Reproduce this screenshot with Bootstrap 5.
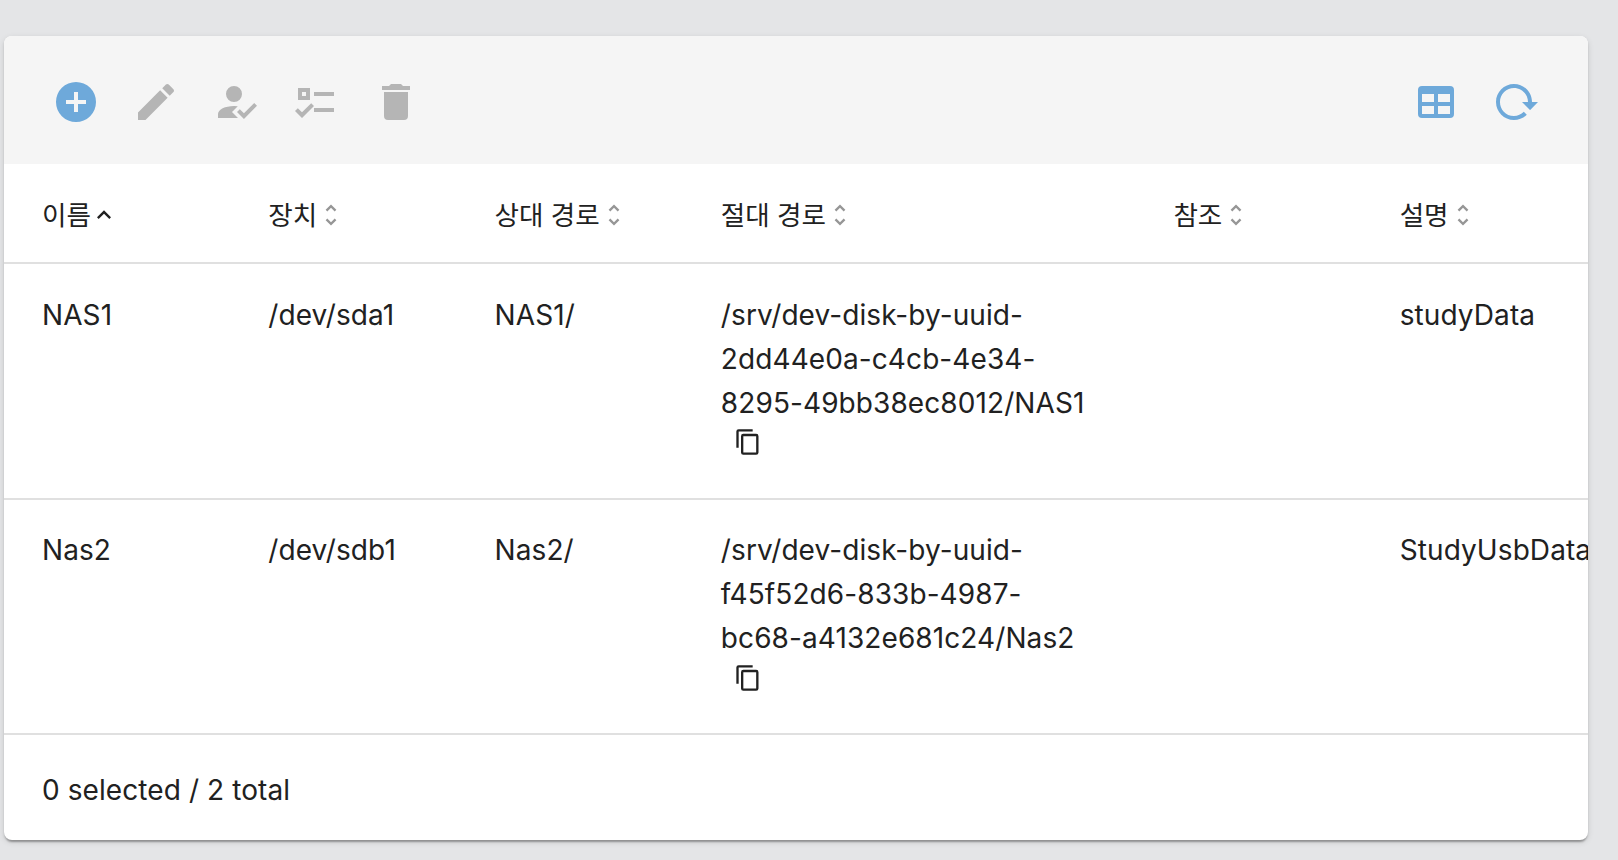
<!DOCTYPE html>
<html lang="ko">
<head>
<meta charset="utf-8">
<meta name="viewport" content="width=device-width, initial-scale=1">
<title>공유 폴더</title>
<link href="https://cdn.jsdelivr.net/npm/bootstrap@5.3.0/dist/css/bootstrap.min.css" rel="stylesheet">
<style>
  body { background: #e4e5e7; color: #212121; font-family: Inter, "Noto Sans CJK KR", sans-serif; font-size: 28px; line-height: 44px; letter-spacing: .09px; height: 860px; overflow: hidden; padding: 36px 30px 20px 4px; }
  .panel { height: 804px; border: 0; border-radius: 8px; background: #fff; color: inherit;
    box-shadow: 0 4px 2px -2px rgba(0,0,0,.2), 0 2px 2px rgba(0,0,0,.14), 0 2px 6px rgba(0,0,0,.12); }
  .toolbar { height: 128px; background: #f5f5f5; border-radius: 8px 8px 0 0; padding: 4px 48px 0; gap: 32px; color: #b5b5b5; }
  .toolbar .btn { padding: 0; border: 0; width: 48px; height: 48px; color: inherit; display: flex; }
  .toolbar .btn.active-tool { color: #6ea9da; }
  svg { fill: currentColor; display: block; flex: none; }
  .sheet { table-layout: fixed; border-collapse: separate; border-spacing: 0; margin: 0; color: inherit; --bs-table-color: #212121; --bs-table-bg: transparent; }
  .sheet > :not(caption) > * > * { padding: 0 0 0 38px; border-bottom: 2px solid #e0e0e0; vertical-align: top; white-space: nowrap; }
  .sheet thead th { height: 100px; font-weight: 400; padding-top: 28px; }
  .sheet tbody td { height: 235.5px; padding-top: 28.5px; }
  .head-label { font-size: 26.6px; letter-spacing: -.05px; height: 44px; }
  .head-label span { padding-top: 1px; }
  .head-label svg { margin-top: 2px; }
  .head-label .sorted { margin-left: -.5px; }
  .copy { padding: 0; border: 0; margin: 3.5px 0 0 13px; color: inherit; display: block; }
  .foot { padding: 33px 38px 0; }
</style>
</head>
<body>
<div class="card panel overflow-visible">
  <div class="toolbar d-flex align-items-center">
    <button class="btn active-tool" aria-label="Create"><svg width="48" height="48" viewBox="0 0 24 24"><path d="M17,13H13V17H11V13H7V11H11V7H13V11H17M12,2A10,10 0 0,0 2,12A10,10 0 0,0 12,22A10,10 0 0,0 22,12A10,10 0 0,0 12,2Z"/></svg></button>
    <button class="btn" aria-label="Edit"><svg width="48" height="48" viewBox="0 0 24 24"><path d="M20.71,7.04C21.1,6.65 21.1,6 20.71,5.63L18.37,3.29C18,2.9 17.35,2.9 16.96,3.29L15.12,5.12L18.87,8.87M3,17.25V21H6.75L17.81,9.93L14.06,6.18L3,17.25Z"/></svg></button>
    <button class="btn" aria-label="Permissions"><svg width="48" height="48" viewBox="0 0 24 24"><path d="M21.1,12.5L22.5,13.91L15.97,20.5L12.5,17L13.9,15.59L15.97,17.67L21.1,12.5M10,17L13,20H3V18C3,15.79 6.58,14 11,14L12.89,14.11L10,17M11,4A4,4 0 0,1 15,8A4,4 0 0,1 11,12A4,4 0 0,1 7,8A4,4 0 0,1 11,4Z"/></svg></button>
    <button class="btn" aria-label="Access control list"><svg width="48" height="48" viewBox="0 0 24 24"><path d="M3,5H9V11H3V5M5,7V9H7V7H5M11,7H21V9H11V7M11,15H21V17H11V15M5,20L1.5,16.5L2.91,15.09L5,17.17L9.59,12.59L11,14L5,20Z"/></svg></button>
    <button class="btn" aria-label="Delete"><svg width="48" height="48" viewBox="0 0 24 24"><path d="M19,4H15.5L14.5,3H9.5L8.5,4H5V6H19M6,19A2,2 0 0,0 8,21H16A2,2 0 0,0 18,19V7H6V19Z"/></svg></button>
    <button class="btn active-tool ms-auto" aria-label="Columns"><svg width="48" height="48" viewBox="0 0 24 24"><path d="M5,4H19A2,2 0 0,1 21,6V18A2,2 0 0,1 19,20H5A2,2 0 0,1 3,18V6A2,2 0 0,1 5,4M5,8V12H11V8H5M13,8V12H19V8H13M5,14V18H11V14H5M13,14V18H19V14H13Z"/></svg></button>
    <button class="btn active-tool" aria-label="Reload"><svg width="48" height="48" viewBox="0 0 24 24"><path d="M2 12C2 16.97 6.03 21 11 21C13.39 21 15.68 20.06 17.4 18.4L15.9 16.9C14.63 18.25 12.86 19 11 19C4.76 19 1.64 11.46 6.05 7.05C10.46 2.64 18 5.77 18 12H15L19 16H19.1L23 12H20C20 7.03 15.97 3 11 3C6.03 3 2 7.03 2 12Z"/></svg></button>
  </div>
  <div class="overflow-hidden">
    <svg class="d-none"><defs>
      <symbol id="unfold" viewBox="0 0 24 24"><path fill="#969696" d="M12,18.17L8.83,15L7.42,16.41L12,21L16.59,16.41L15.17,15M12,5.83L15.17,9L16.58,7.59L12,3L7.41,7.59L8.83,9L12,5.83Z"/></symbol>
      <symbol id="copy" viewBox="0 0 24 24"><path d="M19,21H8V7H19M19,5H8A2,2 0 0,0 6,7V21A2,2 0 0,0 8,23H19A2,2 0 0,0 21,21V7A2,2 0 0,0 19,5M16,1H4A2,2 0 0,0 2,3V17H4V3H16V1Z"/></symbol>
    </defs></svg>
    <table class="table sheet">
      <colgroup><col style="width:14.2857%"><col style="width:14.2857%"><col style="width:14.2857%"><col style="width:28.5714%"><col style="width:14.2857%"><col style="width:14.2857%"></colgroup>
      <thead><tr>
        <th><div class="head-label d-flex align-items-center"><span>이름</span><svg class="sorted" width="28" height="28" viewBox="0 0 24 24"><path d="M7.41,15.41L12,10.83L16.59,15.41L18,14L12,8L6,14L7.41,15.41Z"/></svg></div></th>
        <th><div class="head-label d-flex align-items-center"><span>장치</span><svg width="28" height="28"><use href="#unfold"/></svg></div></th>
        <th><div class="head-label d-flex align-items-center"><span>상대 경로</span><svg width="28" height="28"><use href="#unfold"/></svg></div></th>
        <th><div class="head-label d-flex align-items-center"><span>절대 경로</span><svg width="28" height="28"><use href="#unfold"/></svg></div></th>
        <th><div class="head-label d-flex align-items-center"><span>참조</span><svg width="28" height="28"><use href="#unfold"/></svg></div></th>
        <th><div class="head-label d-flex align-items-center"><span>설명</span><svg width="28" height="28"><use href="#unfold"/></svg></div></th>
      </tr></thead>
      <tbody>
        <tr>
          <td>NAS1</td><td>/dev/sda1</td><td>NAS1/</td>
          <td>/srv/dev-disk-by-uuid-<br>2dd44e0a-c4cb-4e34-<br>8295-49bb38ec8012/NAS1<button class="btn copy" aria-label="Copy"><svg width="28" height="28"><use href="#copy"/></svg></button></td>
          <td></td><td>studyData</td>
        </tr>
        <tr>
          <td>Nas2</td><td>/dev/sdb1</td><td>Nas2/</td>
          <td>/srv/dev-disk-by-uuid-<br>f45f52d6-833b-4987-<br>bc68-a4132e681c24/Nas2<button class="btn copy" aria-label="Copy"><svg width="28" height="28"><use href="#copy"/></svg></button></td>
          <td></td><td>StudyUsbData</td>
        </tr>
      </tbody>
    </table>
    <div class="foot">0 selected / 2 total</div>
  </div>
</div>
<script src="https://cdn.jsdelivr.net/npm/bootstrap@5.3.0/dist/js/bootstrap.bundle.min.js"></script>
</body>
</html>
